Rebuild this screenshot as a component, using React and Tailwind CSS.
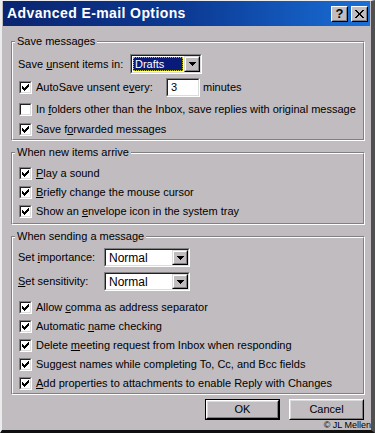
import React from 'react';

const BG = 'bg-[#c0bcc0]';

const Tick = () => (
  <svg width="7" height="7" viewBox="0 0 7 7" shapeRendering="crispEdges" className="block">
    <path d="M0 2h1v3H0z M1 3h1v3H1z M2 4h1v3H2z M3 3h1v3H3z M4 2h1v3H4z M5 1h1v3H5z M6 0h1v3H6z" fill="#000" />
  </svg>
);

const CheckBox = ({ checked }) => (
  <span className="block w-[13px] h-[13px] shrink-0 border border-t-[#808080] border-l-[#808080] border-r-white border-b-white">
    <span className="flex items-center justify-center w-full h-full bg-white border border-t-[#202020] border-l-[#202020] border-r-[#dcdcdc] border-b-[#dcdcdc]">
      {checked && <Tick />}
    </span>
  </span>
);

const Sunken = ({ className = '', children }) => (
  <div className={`border border-t-[#808080] border-l-[#808080] border-r-white border-b-white ${className}`}>
    <div className="flex h-full bg-white border border-t-[#202020] border-l-[#202020] border-r-[#dcdcdc] border-b-[#dcdcdc]">
      {children}
    </div>
  </div>
);

const DropButton = () => (
  <div className={`w-[16px] h-full shrink-0 border border-t-[#dcdcdc] border-l-[#dcdcdc] border-r-black border-b-black ${BG}`}>
    <div className="flex items-center justify-center h-full border border-t-white border-l-white border-r-[#808080] border-b-[#808080]">
      <svg width="7" height="4" viewBox="0 0 7 4" shapeRendering="crispEdges">
        <path d="M0 0h7v1H0z M1 1h5v1H1z M2 2h3v1H2z M3 3h1v1H3z" fill="#000" />
      </svg>
    </div>
  </div>
);

const Group = ({ title, className = '', children }) => (
  <div className={`relative border border-t-[#808080] border-l-[#808080] border-r-white border-b-white ${className}`}>
    <div className="border border-t-white border-l-white border-r-[#808080] border-b-[#808080]">
      {children}
    </div>
    <span className={`absolute left-[3px] top-[-7px] px-[2px] leading-[13px] ${BG}`}>{title}</span>
  </div>
);

const CheckRow = ({ checked = true, className = 'h-[19px]', children }) => (
  <div className={`flex items-center pl-[6px] gap-[4px] ${className}`}>
    <CheckBox checked={checked} />
    <span className="leading-[13px] whitespace-nowrap">{children}</span>
  </div>
);

const RaisedButton = ({ label, isDefault }) => (
  <div className={`w-[75px] h-[21px] ${isDefault ? 'border border-black' : ''}`}>
    <div className="h-full border border-t-white border-l-white border-r-black border-b-black">
      <div className={`flex items-center justify-center h-full border border-t-[#dcdcdc] border-l-[#dcdcdc] border-r-[#808080] border-b-[#808080] ${BG}`}>
        {label}
      </div>
    </div>
  </div>
);

const TitleButton = ({ children }) => (
  <div className={`w-[17px] h-[16px] border border-t-white border-l-white border-r-black border-b-black ${BG}`}>
    <div className="flex items-center justify-center h-full border border-r-[#808080] border-b-[#808080] border-t-transparent border-l-transparent">
      {children}
    </div>
  </div>
);

export default function App() {
  return (
    <div
      className={`relative w-[375px] h-[433px] overflow-hidden ${BG} border-l-2 border-t border-l-[#ececec] border-t-[#ececec] border-r-[4px] border-r-[#505050] border-b-[3px] border-b-[#101010] px-px text-black text-[11px] font-['Liberation_Sans',Arial,sans-serif]`}
    >
      {/* title bar */}
      <div className="flex items-center h-[25px] pl-[4px] pr-[2px] bg-gradient-to-r from-[#0a2470] via-[#0c3a94] to-[#1a6fd8]">
        <span className="text-white font-bold text-[14px] tracking-[0.4px] font-['Liberation_Sans',Arial,sans-serif]">
          Advanced E-mail Options
        </span>
        <div className="ml-auto flex gap-[3px]">
          <TitleButton>
            <span className="font-bold text-[13px] leading-none">?</span>
          </TitleButton>
          <TitleButton>
            <svg width="9" height="8" viewBox="0 0 9 8" shapeRendering="crispEdges">
              <path d="M0 0h2l2.5 3L7 0h2L5.5 4 9 8H7L4.5 5 2 8H0l3.5-4z" fill="#000" />
            </svg>
          </TitleButton>
        </div>
      </div>

      <div className="pl-[8px] pr-[5px]">
        {/* Save messages */}
        <Group title="Save messages" className="mt-[15px]">
          <div className="flex items-center h-[20px] mt-[11px]">
            <span className="w-[117px] pl-[5px] leading-[13px]">
              Save <u>u</u>nsent items in:
            </span>
            <Sunken className="w-[72px] h-[20px]">
              <div className="flex-1 flex items-center p-[1px]">
                <span className="flex items-center h-full w-full bg-[#0a1a7a] text-white pl-[2px] outline-1 outline-dotted outline-[#c0c000] -outline-offset-1">
                  Drafts
                </span>
              </div>
              <DropButton />
            </Sunken>
          </div>
          <div className="flex items-center h-[20px] mt-[3px] pl-[6px]">
            <CheckBox checked />
            <span className="ml-[4px] w-[130px] leading-[13px]">
              AutoSave unsent e<u>v</u>ery:
            </span>
            <Sunken className="w-[34px] h-[19px]">
              <span className="pl-[3px] self-center">3</span>
            </Sunken>
            <span className="ml-[3px]">minutes</span>
          </div>
          <CheckRow checked={false} className="h-[19px] mt-[3px]">
            In <u>f</u>olders other than the Inbox, save replies with original message
          </CheckRow>
          <CheckRow className="h-[19px] mt-[1px]">
            Save f<u>o</u>rwarded messages
          </CheckRow>
        </Group>

        {/* When new items arrive */}
        <Group title="When new items arrive" className="mt-[11px]">
          <div className="pt-[10px] pb-[2px]">
            <CheckRow>
              <u>P</u>lay a sound
            </CheckRow>
            <CheckRow>
              <u>B</u>riefly change the mouse cursor
            </CheckRow>
            <CheckRow>
              Show an <u>e</u>nvelope icon in the system tray
            </CheckRow>
          </div>
        </Group>

        {/* When sending a message */}
        <Group title="When sending a message" className="mt-[11px]">
          <div className="flex items-center h-[19px] mt-[10px]">
            <span className="w-[91px] pl-[5px] leading-[13px]">
              Set <u>i</u>mportance:
            </span>
            <Sunken className="w-[86px] h-[19px]">
              <span className="flex-1 self-center pl-[3px] text-[12px]">Normal</span>
              <DropButton />
            </Sunken>
          </div>
          <div className="flex items-center h-[19px] mt-[5px]">
            <span className="w-[91px] pl-[5px] leading-[13px]">
              <u>S</u>et sensitivity:
            </span>
            <Sunken className="w-[86px] h-[19px]">
              <span className="flex-1 self-center pl-[3px] text-[12px]">Normal</span>
              <DropButton />
            </Sunken>
          </div>
          <div className="mt-[7px]">
            <CheckRow>
              Allow <u>c</u>omma as address separator
            </CheckRow>
            <CheckRow>
              Automatic <u>n</u>ame checking
            </CheckRow>
            <CheckRow>
              Delete <u>m</u>eeting request from Inbox when responding
            </CheckRow>
            <CheckRow>Suggest names while completing To, Cc, and Bcc fields</CheckRow>
            <CheckRow>
              <u>A</u>dd properties to attachments to enable Reply with Changes
            </CheckRow>
          </div>
        </Group>

        {/* buttons */}
        <div className="flex justify-end gap-[9px] mt-[4px] pr-px">
          <RaisedButton label="OK" isDefault />
          <RaisedButton label="Cancel" />
        </div>
      </div>

      <span className="absolute right-0 bottom-0 text-[9px] leading-[10px] text-black">© JL Mellen</span>
    </div>
  );
}
